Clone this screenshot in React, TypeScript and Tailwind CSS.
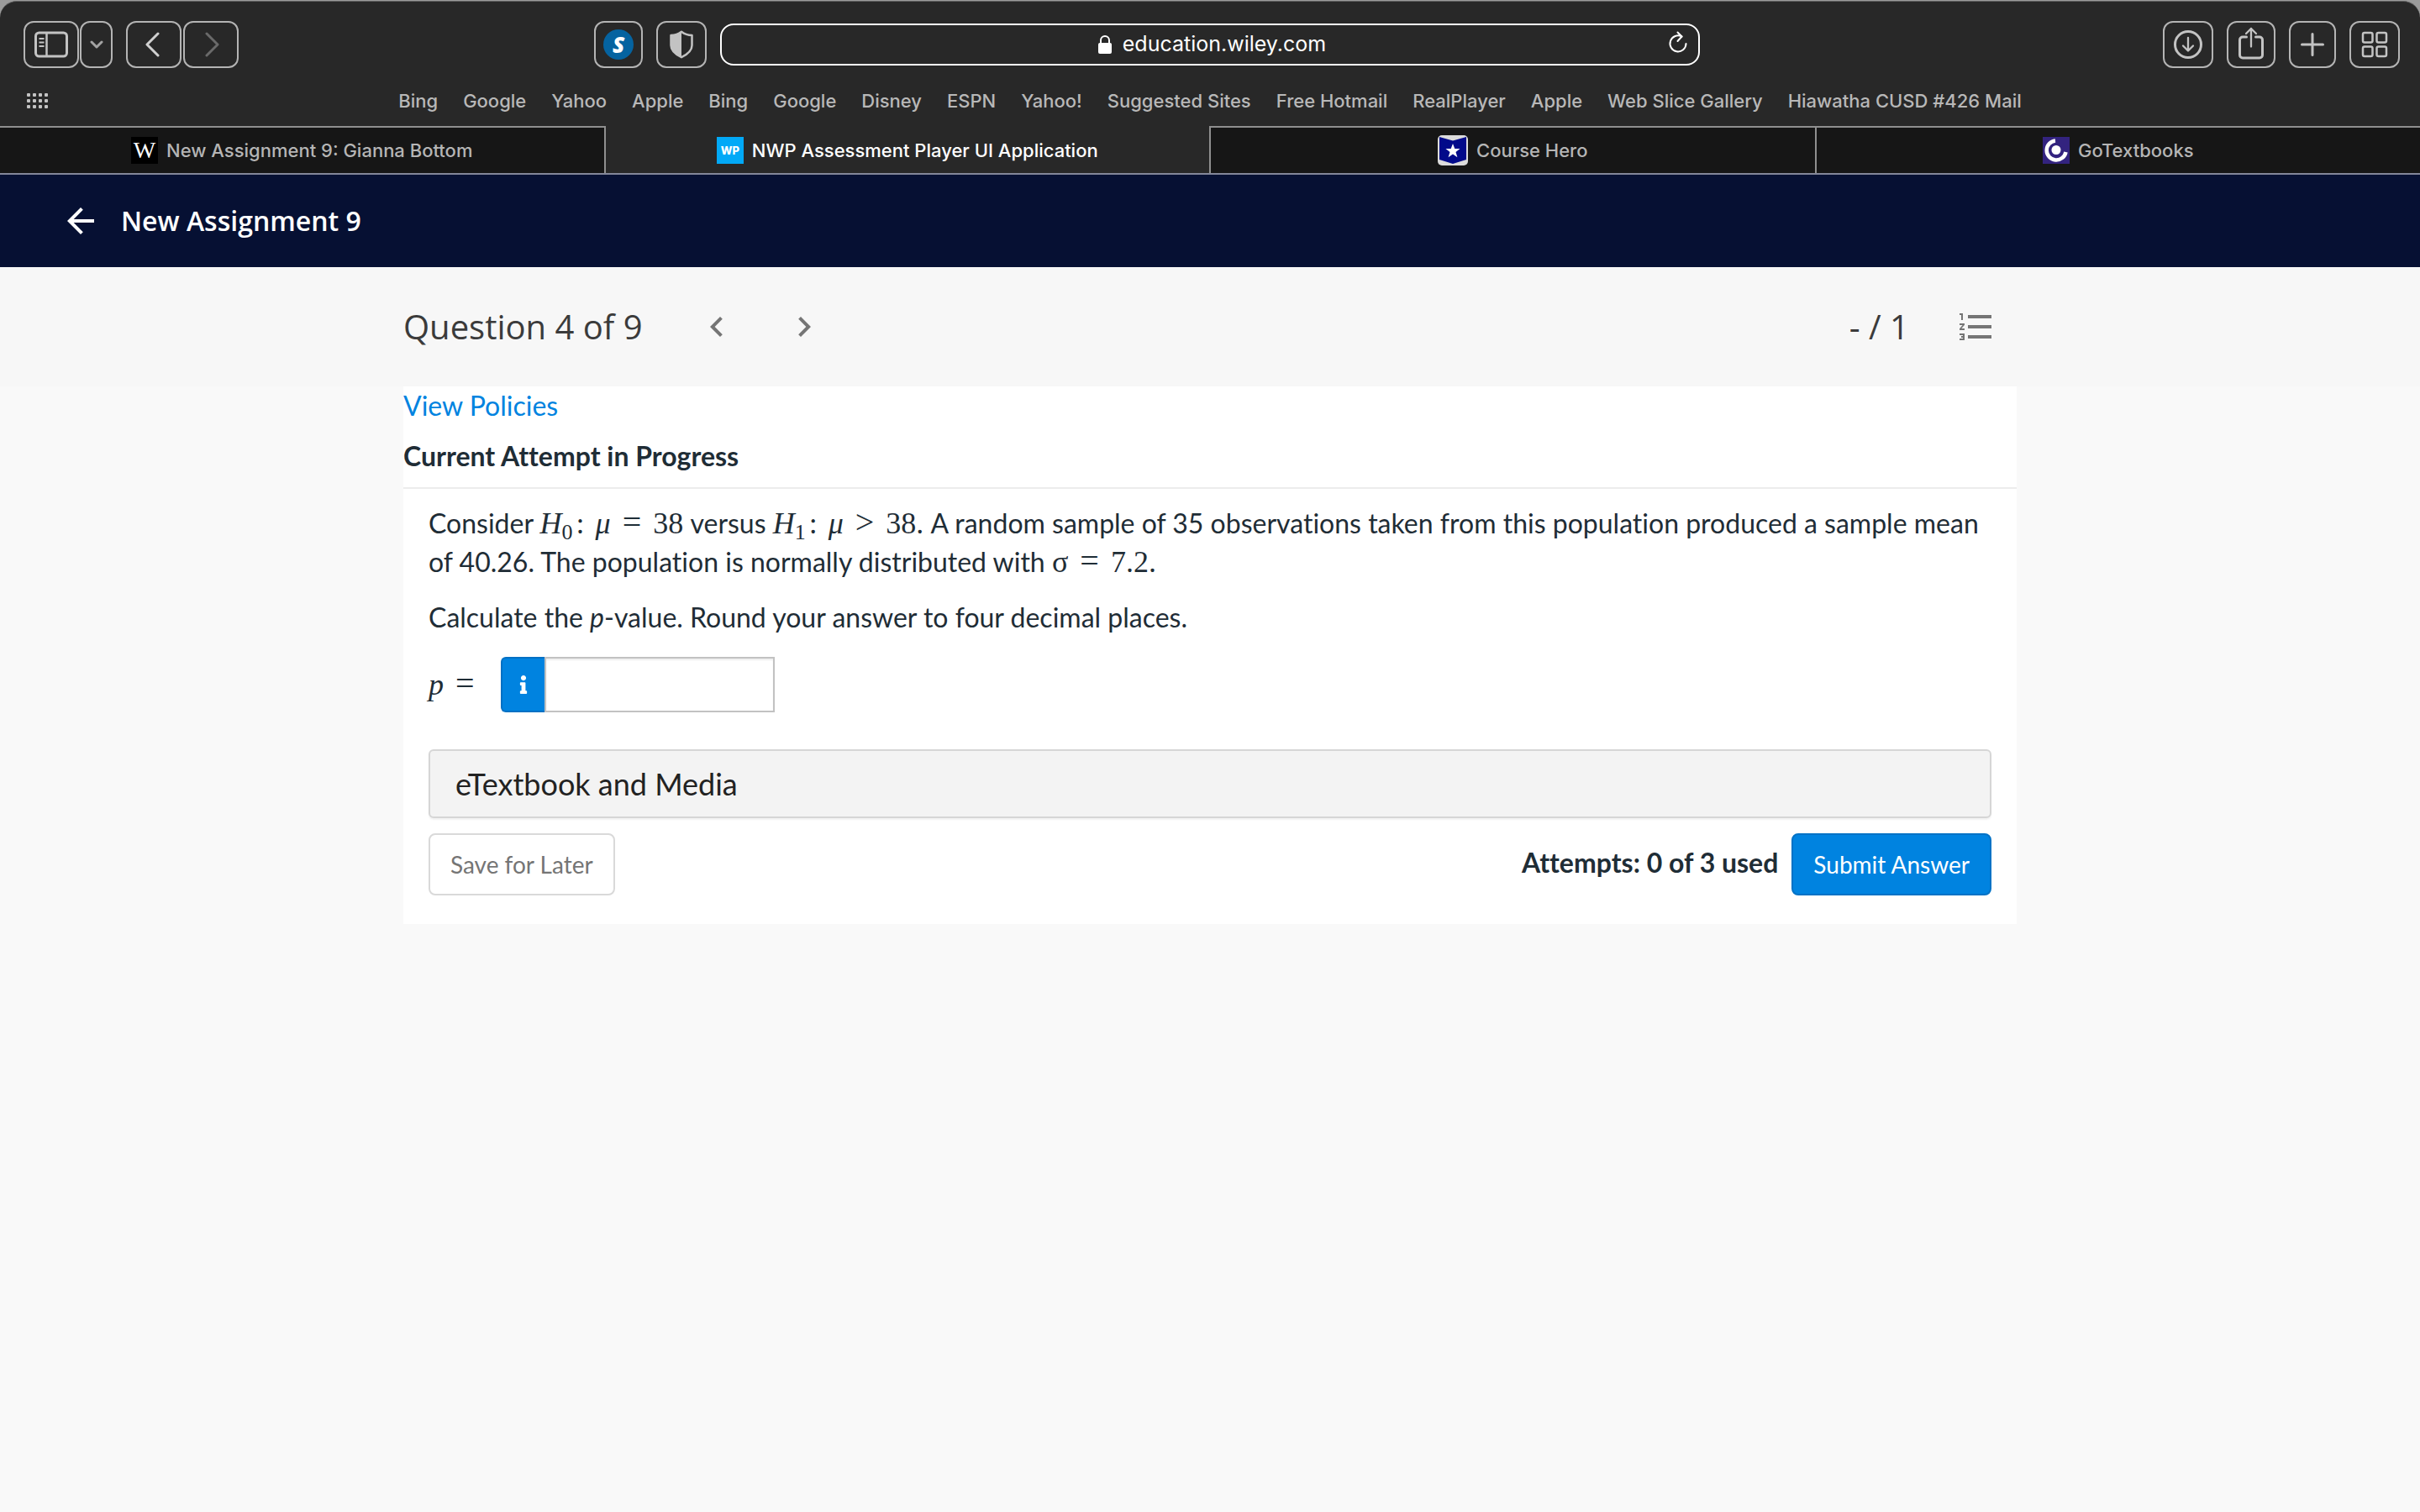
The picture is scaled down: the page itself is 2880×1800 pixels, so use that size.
import type { ReactNode } from "react";
import {
  MdArrowBack,
  MdChevronLeft,
  MdChevronRight,
  MdFormatListNumbered,
} from "react-icons/md";
import { FaInfo } from "react-icons/fa";

const bookmarks = [
  "Bing",
  "Google",
  "Yahoo",
  "Apple",
  "Bing",
  "Google",
  "Disney",
  "ESPN",
  "Yahoo!",
  "Suggested Sites",
  "Free Hotmail",
  "RealPlayer",
  "Apple",
  "Web Slice Gallery",
  "Hiawatha CUSD #426 Mail",
];

function ToolButton({
  label,
  width = "w-[58px]",
  children,
}: {
  label: string;
  width?: string;
  children: ReactNode;
}) {
  return (
    <button
      type="button"
      aria-label={label}
      className={`flex h-14 shrink-0 items-center justify-center rounded-xl border-2 border-[#b4b4b4] text-[#c3c3c3] ${width}`}
    >
      {children}
    </button>
  );
}

function Toolbar() {
  return (
    <div className="flex h-[101px] items-center gap-4 px-6">
      <div className="flex flex-1 items-center justify-between">
        <div className="ml-1 flex items-center gap-4">
          <div className="flex gap-px">
            <ToolButton label="Sidebar" width="w-[66px]">
              <svg width="40" height="32" viewBox="0 0 40 32" fill="none" stroke="currentColor">
                <rect x="1.5" y="2" width="37" height="28" rx="4" strokeWidth="3" />
                <path d="M14.5 2v28" strokeWidth="2.5" />
                <path d="M5.5 9h6M5.5 13.5h6M5.5 18h6" strokeWidth="2" />
              </svg>
            </ToolButton>
            <ToolButton label="Tab groups" width="w-[39px]">
              <svg width="16" height="10" viewBox="0 0 16 10" fill="none" stroke="#a3a3a3" strokeWidth="3" strokeLinecap="round" strokeLinejoin="round">
                <path d="M2 2l6 6 6-6" />
              </svg>
            </ToolButton>
          </div>
          <div className="flex gap-0.5">
            <ToolButton label="Back" width="w-[66px]">
              <svg width="18" height="30" viewBox="0 0 18 30" fill="none" stroke="#d0d0d0" strokeWidth="3" strokeLinecap="round" strokeLinejoin="round" className="mr-1">
                <path d="M16 2L3 15l13 13" />
              </svg>
            </ToolButton>
            <ToolButton label="Forward" width="w-[66px]">
              <svg width="18" height="30" viewBox="0 0 18 30" fill="none" stroke="#6a6a6a" strokeWidth="3" strokeLinecap="round" strokeLinejoin="round" className="ml-1">
                <path d="M2 2l13 13L2 28" />
              </svg>
            </ToolButton>
          </div>
        </div>
        <div className="flex items-center gap-4">
          <ToolButton label="Extension">
            <span className="flex size-9 items-center justify-center rounded-full bg-[#0563a0] font-['Open_Sans'] text-[26px] font-extrabold italic leading-none text-white">
              S
            </span>
          </ToolButton>
          <ToolButton label="Privacy report" width="w-[60px]">
            <svg width="30" height="34" viewBox="0 0 30 34">
              <path d="M15 1.8C11 5 6 6 2.5 6v12c0 7 6 11 12.5 14.2C21.5 29 27.5 25 27.5 18V6C24 6 19 5 15 1.8z" fill="none" stroke="currentColor" strokeWidth="2.5" strokeLinejoin="round" />
              <path d="M15 1.8C11 5 6 6 2.5 6v12c0 7 6 11 12.5 14.2z" fill="currentColor" />
            </svg>
          </ToolButton>
        </div>
      </div>

      <div className="flex h-[50px] w-[1166px] items-center rounded-2xl border-2 border-white pl-10 pr-3 text-white">
        <div className="flex flex-1 items-center justify-center gap-3">
          <svg width="18" height="24" viewBox="0 0 18 24" fill="none">
            <rect x="1" y="10" width="16" height="13" rx="2" fill="white" />
            <path d="M4 11V7a5 5 0 0 1 10 0v4" stroke="white" strokeWidth="2" />
          </svg>
          <input
            aria-label="Address"
            defaultValue="education.wiley.com"
            className="field-sizing-content bg-transparent font-['Inter'] text-[25px] outline-none"
          />
        </div>
        <button type="button" aria-label="Reload">
          <svg width="24" height="28" viewBox="0 0 24 28" fill="none" stroke="white" strokeWidth="2" strokeLinecap="round" strokeLinejoin="round" className="mb-1">
            <path d="M16.5 6.5A9.5 9.5 0 1 0 21.5 15" />
            <path d="M11.5 1.5l5 5-5 5.5" />
          </svg>
        </button>
      </div>

      <div className="flex flex-1 items-center justify-end gap-4">
        <ToolButton label="Downloads" width="w-[60px]">
          <svg width="36" height="36" viewBox="0 0 36 36" fill="none" stroke="currentColor" strokeLinecap="round" strokeLinejoin="round">
            <circle cx="18" cy="18" r="15.5" strokeWidth="3" />
            <path d="M18 10v15M12 19.5l6 6 6-6" strokeWidth="2.3" />
          </svg>
        </ToolButton>
        <ToolButton label="Share">
          <svg width="32" height="42" viewBox="0 0 32 42" fill="none" stroke="currentColor" strokeLinecap="round" strokeLinejoin="round" className="mb-1">
            <path d="M10.5 14H6a3.5 3.5 0 0 0-3.5 3.5v18A3.5 3.5 0 0 0 6 39h20a3.5 3.5 0 0 0 3.5-3.5v-18A3.5 3.5 0 0 0 26 14h-4.5" strokeWidth="3" />
            <path d="M16 25.5V4M10 10l6-6 6 6" strokeWidth="2.3" />
          </svg>
        </ToolButton>
        <ToolButton label="New tab" width="w-[56px]">
          <svg width="28" height="28" viewBox="0 0 28 28" fill="none" stroke="currentColor" strokeWidth="3" strokeLinecap="round">
            <path d="M14 1.5v25M1.5 14h25" />
          </svg>
        </ToolButton>
        <ToolButton label="Tab overview" width="w-[60px]">
          <svg width="32" height="32" viewBox="0 0 32 32" fill="none" stroke="currentColor" strokeWidth="2.5">
            <rect x="2" y="2" width="11.5" height="11.5" rx="2" />
            <rect x="18.5" y="2" width="11.5" height="11.5" rx="2" />
            <rect x="2" y="18.5" width="11.5" height="11.5" rx="2" />
            <rect x="18.5" y="18.5" width="11.5" height="11.5" rx="2" />
          </svg>
        </ToolButton>
      </div>
    </div>
  );
}

function BookmarksBar() {
  return (
    <div className="grid h-[47px] grid-cols-[1fr_auto_1fr] items-start px-8 pt-[3px]">
      <button type="button" aria-label="Show all bookmarks" className="mt-1 w-7">
        <svg width="26" height="20" viewBox="0 0 26 20" fill="#c3c3c3">
          {[0, 7, 14, 21].map((x) =>
            [1, 8, 15].map((y) => <rect key={`${x}-${y}`} x={x} y={y} width="4" height="4" rx="1" />),
          )}
        </svg>
      </button>
      <nav className="flex gap-[30px] whitespace-nowrap text-[22px] font-medium leading-7 text-[#b8b8b8]">
        {bookmarks.map((name, i) => (
          <a key={i} href="#">
            {name}
          </a>
        ))}
      </nav>
    </div>
  );
}

function Tab({
  icon,
  title,
  active = false,
  edge,
}: {
  icon: ReactNode;
  title: string;
  active?: boolean;
  edge: string;
}) {
  return (
    <button
      type="button"
      role="tab"
      aria-selected={active}
      className={`flex h-14 flex-1 basis-0 items-center justify-center gap-2.5 border-[#8f8f8f] text-[22px] font-medium ${edge} ${
        active ? "bg-[#282828] pt-0.5 text-white" : "border-t-2 bg-[#161616] text-[#b5b5b5]"
      }`}
    >
      {icon}
      {title}
    </button>
  );
}

function TabBar() {
  return (
    <div role="tablist" className="flex border-b-2 border-[#83879a]">
      <Tab
        edge="border-r-2"
        title="New Assignment 9: Gianna Bottom"
        icon={
          <span className="flex size-8 items-center justify-center bg-black font-['Liberation_Serif'] text-[28px] leading-none text-white">
            W
          </span>
        }
      />
      <Tab
        active
        edge=""
        title="NWP Assessment Player UI Application"
        icon={
          <span className="flex size-8 items-center justify-center bg-[#02a9f7] text-[13px] font-extrabold leading-none text-white">
            WP
          </span>
        }
      />
      <Tab
        edge="border-l-2"
        title="Course Hero"
        icon={
          <svg width="36" height="36" viewBox="0 0 36 36">
            <rect width="36" height="36" rx="5" fill="#dcdcdc" />
            <path d="M2 2l16 4.5L34 2v27l-16 5-16-5z" fill="#020a8a" />
            <path d="M18 10l2.3 6h6.2l-5 4 1.9 6.3L18 22.6l-5.4 3.7 1.9-6.3-5-4h6.2z" fill="white" />
          </svg>
        }
      />
      <Tab
        edge="border-l-2"
        title="GoTextbooks"
        icon={
          <svg width="32" height="32" viewBox="0 0 32 32">
            <rect width="32" height="32" fill="#33237f" />
            <circle cx="16" cy="15.5" r="5.5" fill="white" />
            <path d="M15 4.5A11.5 11.5 0 1 0 27.5 18" fill="none" stroke="white" strokeWidth="4.5" />
          </svg>
        }
      />
    </div>
  );
}

function Formula({ children }: { children: ReactNode }) {
  return (
    <span className="whitespace-nowrap font-['Liberation_Serif'] text-[36px] leading-none">
      {children}
    </span>
  );
}

function Relation({ sign }: { sign: string }) {
  return <span className="mx-3.5 text-[40px] leading-none">{sign}</span>;
}

function Hypothesis({ index, sign }: { index: string; sign: string }) {
  return (
    <Formula>
      <i>H</i>
      <sub className="text-[26px]">{index}</sub>
      <span className="mx-1">:</span> <i>μ</i>
      <Relation sign={sign} />
      38
    </Formula>
  );
}

function Question() {
  return (
    <main className="mx-auto w-full max-w-[1920px] bg-white font-['Lato'] text-[32px] leading-[46px] text-[#1f2d36] [font-variant-ligatures:none]">
      <div className="border-b-2 border-[#ececec] pb-3.5">
        <a href="#" className="block text-[#0083e0]">
          View Policies
        </a>
        <h2 className="mt-3.5 font-bold">Current Attempt in Progress</h2>
      </div>
      <div className="px-[30px] pb-[34px] pt-[18px]">
        <p>
          Consider <Hypothesis index="0" sign="=" /> versus <Hypothesis index="1" sign=">" />
          <Formula>.</Formula> A random sample of 35 observations taken from this population
          produced a sample mean of 40.26. The population is normally distributed with{" "}
          <Formula>
            σ<Relation sign="=" />
            7.2.
          </Formula>
        </p>
        <p className="mt-5">
          Calculate the <i>p</i>-value. Round your answer to four decimal places.
        </p>
        <div className="mt-6 flex items-center">
          <label htmlFor="p-value" className="w-[86px] whitespace-nowrap">
            <Formula>
              <i>p</i>
              <Relation sign="=" />
            </Formula>
          </label>
          <button
            type="button"
            aria-label="Answer format"
            className="flex h-[66px] w-[52px] items-center justify-center rounded-l-md border-2 border-r-0 border-[#0070c4] bg-[#0083e0] text-white"
          >
            <FaInfo size={22} />
          </button>
          <input
            id="p-value"
            type="text"
            className="h-[66px] w-[274px] border-2 border-[#c2c2c2] bg-white px-3 shadow-[inset_0_2px_2px_#eeeeee] outline-none"
          />
        </div>
        <button
          type="button"
          className="mt-11 flex h-[82px] w-full items-center rounded-md border-2 border-[#d6d6d6] bg-[#f3f3f3] px-[30px] text-[36px] text-[#222222] shadow-[0_2px_2px_#f2f2f2]"
        >
          eTextbook and Media
        </button>
        <div className="mt-[18px] flex items-center justify-between">
          <button
            type="button"
            className="h-[74px] rounded-lg border-2 border-[#d9d9d9] bg-white px-6 text-[28px] text-[#757575]"
          >
            Save for Later
          </button>
          <div className="flex items-center gap-4">
            <span className="pb-1 font-bold">Attempts: 0 of 3 used</span>
            <button
              type="button"
              className="h-[74px] rounded-lg border-2 border-[#0072c6] bg-[#0083e0] px-6 text-[28px] text-white"
            >
              Submit Answer
            </button>
          </div>
        </div>
      </div>
    </main>
  );
}

export default function App() {
  return (
    <div className="min-h-screen bg-[#f9f9f9]">
      <div className="bg-[#9b9b9b] pt-px font-['Inter']">
        <div className="rounded-t-[20px] border-t border-[#5f5f5f] bg-[#282828]">
          <Toolbar />
          <BookmarksBar />
          <TabBar />
        </div>
      </div>
      <header className="flex h-[110px] items-center gap-6 bg-[#061033] px-[72px] font-['Open_Sans'] text-[32px] text-white">
        <button type="button" aria-label="Back to assignments">
          <MdArrowBack size={48} />
        </button>
        <h1 className="font-semibold">New Assignment 9</h1>
      </header>
      <div className="bg-[#f7f7f7] font-['Open_Sans'] text-[40px] text-[#3b3b3b]">
        <div className="mx-auto flex h-[142px] max-w-[1920px] items-center pr-6">
          <span>Question 4 of 9</span>
          <div className="ml-16 flex gap-14 text-[#757575]">
            <button type="button" aria-label="Previous question">
              <MdChevronLeft size={48} />
            </button>
            <button type="button" aria-label="Next question">
              <MdChevronRight size={48} />
            </button>
          </div>
          <span className="ml-auto">- / 1</span>
          <button type="button" aria-label="Question list" className="ml-14 text-[#757575]">
            <MdFormatListNumbered size={48} />
          </button>
        </div>
      </div>
      <Question />
    </div>
  );
}
